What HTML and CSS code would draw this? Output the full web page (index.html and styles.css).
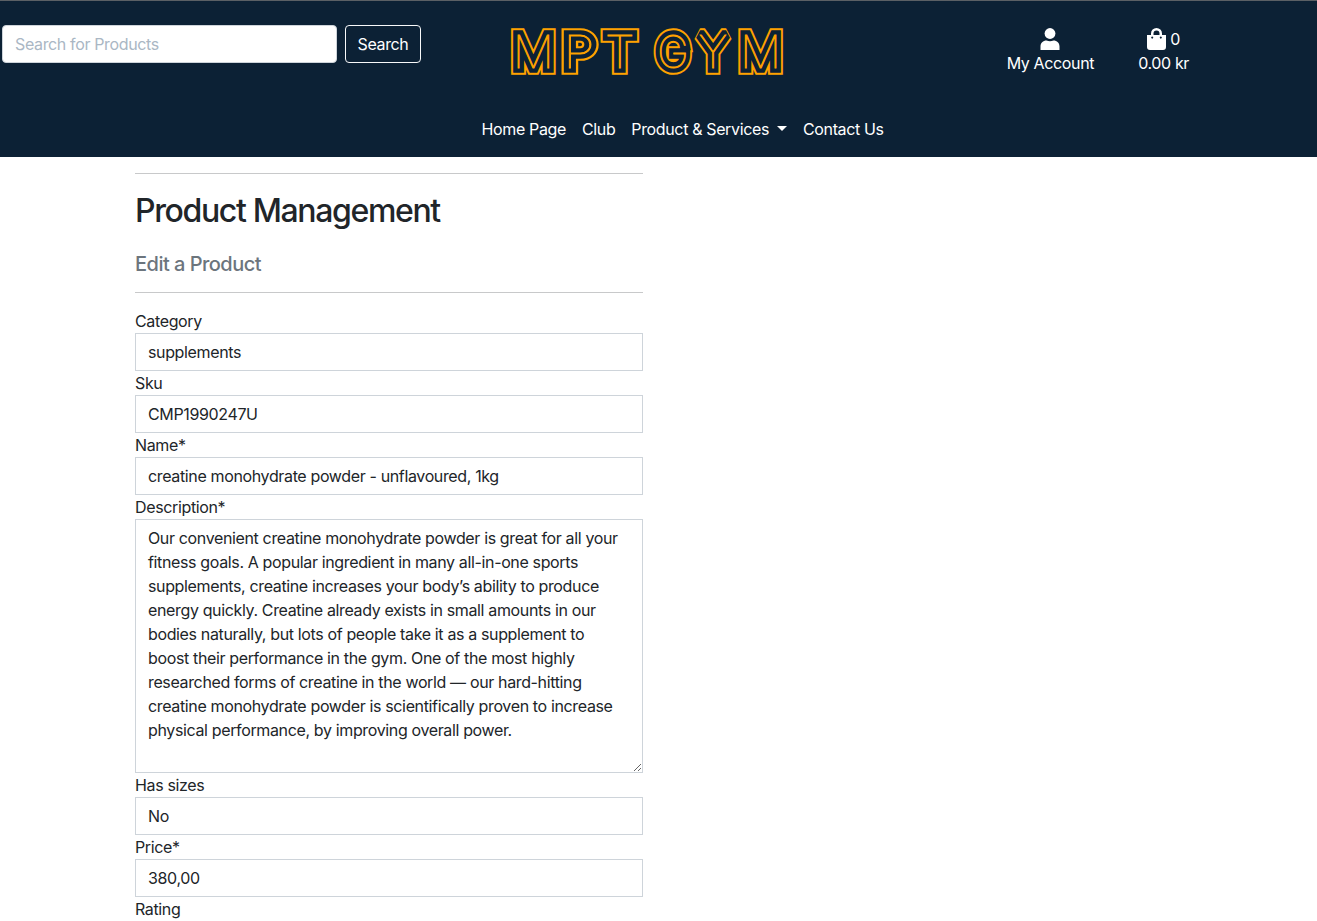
FILE: index.html
```html
<!DOCTYPE html>
<html lang="en">
<head>
<meta charset="utf-8">
<title>MPT GYM - Product Management</title>
<link rel="stylesheet" href="styles.css">
</head>
<body>
<header class="site-header">
  <div class="top-row">
    <form class="search">
      <input class="search-input" type="text" placeholder="Search for Products">
      <button class="search-button" type="button">Search</button>
    </form>
    <a class="brand" aria-label="MPT GYM">
      <svg class="logo" width="280" height="54" viewBox="508 24 280 54">
        <defs>
          <g id="word">
            <text transform="translate(512.700 67.500) scale(1.02 1)">M</text>
            <text transform="translate(563.500 67.500) scale(1.14 1)">P</text>
            <text transform="translate(604.700 67.500) scale(1.08 1)">T</text>
            <text transform="translate(657 67.500) scale(.96 1)">G</text>
            <text transform="translate(698.500 67.500) scale(1 1)">Y</text>
            <text transform="translate(740 67.500) scale(1.02 1)">M</text>
          </g>
        </defs>
        <use href="#word" class="logo-edge"/>
        <use href="#word" class="logo-fill"/>
        <use href="#word" class="logo-core"/>
      </svg>
    </a>
    <div class="account">
      <a class="account-link">
        <svg class="icon" width="20" height="23" viewBox="0 0 20 23"><circle cx="10" cy="5.5" r="5.4"/><path d="M.5 22v-3.500c0-3.600 2.500-6 6-6 1.200.5 2.300.7 3.500.7s2.300-.2 3.500-.7c3.500 0 6 2.400 6 6V22z"/></svg>
        <span>My Account</span>
      </a>
      <a class="account-link">
        <span class="bag-line">
          <svg class="icon" width="19" height="23" viewBox="0 0 19 23"><path fill-rule="evenodd" d="M0 7h4V5.500a5.500 5.500 0 0 1 11 0V7h4v12a3 3 0 0 1-3 3H3a3 3 0 0 1-3-3zM6.500 7h6V5.500a3 3 0 0 0-6 0zM5.200 8.500a1 1 0 1 0 .01 0zm8.600 0a1 1 0 1 0 .01 0z"/></svg>
          <span>0</span>
        </span>
        <span>0.00 kr</span>
      </a>
    </div>
  </div>
  <nav class="main-nav">
    <a>Home Page</a>
    <a>Club</a>
    <a class="dropdown">Product &amp; Services</a>
    <a>Contact Us</a>
  </nav>
</header>
<main class="content">
  <hr class="rule">
  <h2 class="title">Product Management</h2>
  <h5 class="subtitle">Edit a Product</h5>
  <hr class="rule">
  <form class="product-form">
    <label class="label">Category</label>
    <div class="control">supplements</div>
    <label class="label">Sku</label>
    <input class="control" value="CMP1990247U">
    <label class="label">Name*</label>
    <input class="control" value="creatine monohydrate powder - unflavoured, 1kg">
    <label class="label">Description*</label>
    <textarea class="control area">Our convenient creatine monohydrate powder is great for all your fitness goals. A popular ingredient in many all-in-one sports supplements, creatine increases your body’s ability to produce energy quickly. Creatine already exists in small amounts in our bodies naturally, but lots of people take it as a supplement to boost their performance in the gym. One of the most highly researched forms of creatine in the world — our hard-hitting creatine monohydrate powder is scientifically proven to increase physical performance, by improving overall power.</textarea>
    <label class="label">Has sizes</label>
    <div class="control">No</div>
    <label class="label">Price*</label>
    <input class="control" value="380,00">
    <label class="label">Rating</label>
    <input class="control" value="">
  </form>
</main>
</body>
</html>
```

FILE: styles.css
```css
* { box-sizing: border-box; }
html { height: 100%; overflow: hidden; }
body {
  margin: 0;
  height: 100%;
  overflow: hidden;
  background: #fff;
  color: #212529;
  font: 400 16px/24px Inter, sans-serif;
  letter-spacing: -0.36px;
}
input, button, textarea { font: inherit; letter-spacing: inherit; color: inherit; }

.site-header {
  height: 157px;
  border-top: 1px solid #5b6065;
  background: #0c2135;
  color: #fff;
}
.top-row { display: flex; height: 108px; padding: 23px 128px 0 2px; }
.search { display: flex; gap: 8px; width: 506px; padding-top: 1px; }
.search-input {
  width: 335px;
  height: 38px;
  padding: 6px 12px;
  border: 1px solid #ced4da;
  border-radius: 4px;
  background: #fff;
}
.search-input::placeholder { color: #aab7c4; opacity: 1; }
.search-button {
  width: 76px;
  height: 38px;
  padding: 0;
  border: 1px solid #f8f9fa;
  border-radius: 4px;
  background: transparent;
}
.brand { width: 280px; }
.logo { display: block; overflow: visible; }
.logo text { font: 100 45px Inter, sans-serif; letter-spacing: 0; }
.logo-edge { fill: #ffa200; stroke: #ffa200; stroke-width: 13.6; stroke-linejoin: miter; stroke-miterlimit: 1.6; }
.logo-fill { fill: #0c2135; stroke: #0c2135; stroke-width: 9.6; stroke-linejoin: miter; stroke-miterlimit: 1.6; }
.logo-core { fill: #ffa200; stroke: #ffa200; stroke-width: .8; }
.account { display: flex; flex: 1; justify-content: flex-end; gap: 44px; padding-top: 3px; }
.account-link { display: flex; flex-direction: column; align-items: center; height: 48px; }
.icon { fill: currentColor; margin-top: 1px; }
.bag-line { display: flex; gap: 4px; height: 24px; }
.main-nav { display: flex; gap: 16px; padding: 8px 0 0 481.5px; }
.dropdown { display: flex; align-items: center; gap: 8px; }
.dropdown::after {
  content: "";
  margin-bottom: 2px;
  border-top: 5px solid;
  border-right: 5px solid transparent;
  border-left: 5px solid transparent;
}

.content { width: 508px; margin-left: 135px; padding-top: 16px; }
.rule { height: 1px; margin: 0; border: 0; background: #c8c9ca; }
.title { margin: 18px 0 22px; font-size: 32px; font-weight: 500; line-height: 38px; letter-spacing: -1.36px; }
.subtitle { margin: 0 0 16px; color: #6c757d; font-size: 20px; font-weight: 500; line-height: 24px; letter-spacing: -.52px; }
.product-form { display: flex; flex-direction: column; padding-top: 16px; }
.label { height: 24px; }
.control {
  width: 100%;
  height: 38px;
  padding: 6px 12px;
  border: 1px solid #ced4da;
  border-radius: 0;
  background: #fff;
}
.area { height: 254px; padding-right: 20px; resize: vertical; overflow: auto; }
```
